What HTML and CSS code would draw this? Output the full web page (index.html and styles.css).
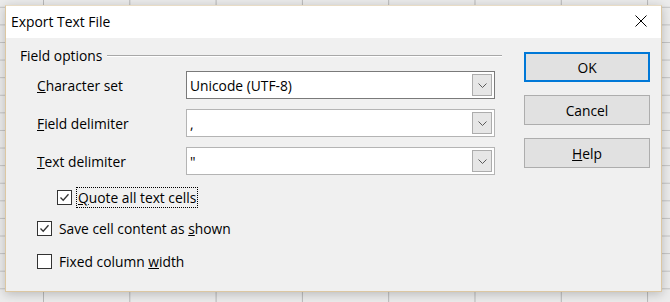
FILE: index.html
```html
<!DOCTYPE html>
<html lang="en">
<head>
    <meta charset="UTF-8">
    <title>Export Text File</title>
    <link rel="stylesheet" href="styles.css">
</head>
<body>
    <div class="dialog">
        <div class="titlebar">
            <span class="title">Export Text File</span>
            <svg class="close" viewBox="0 0 12 12" width="12" height="12">
                <path d="M0.5 0.5L11.5 11.5M11.5 0.5L0.5 11.5" stroke="#000" stroke-width="1" fill="none"/>
            </svg>
        </div>
        <div class="dialog-body">
            <div class="options">
                <div class="group-head">
                    <span>Field options</span>
                    <span class="rule"></span>
                </div>

                <div class="field">
                    <label><u>C</u>haracter set</label>
                    <div class="combo active">
                        <span class="value">Unicode (UTF-8)</span>
                        <span class="drop"><svg viewBox="0 0 9 5" width="9" height="5"><path d="M0.5 0.5L4.5 4.5L8.5 0.5" stroke="#5a5a5a" fill="none"/></svg></span>
                    </div>
                </div>
                <div class="field">
                    <label><u>F</u>ield delimiter</label>
                    <div class="combo">
                        <span class="value">,</span>
                        <span class="drop"><svg viewBox="0 0 9 5" width="9" height="5"><path d="M0.5 0.5L4.5 4.5L8.5 0.5" stroke="#5a5a5a" fill="none"/></svg></span>
                    </div>
                </div>
                <div class="field">
                    <label><u>T</u>ext delimiter</label>
                    <div class="combo">
                        <span class="value">"</span>
                        <span class="drop"><svg viewBox="0 0 9 5" width="9" height="5"><path d="M0.5 0.5L4.5 4.5L8.5 0.5" stroke="#5a5a5a" fill="none"/></svg></span>
                    </div>
                </div>

                <div class="checks">
                    <div class="check indent">
                        <span class="box on"><svg viewBox="0 0 13 13" width="13" height="13"><path d="M2.5 6.5L5.2 9.3L10.5 3.2" stroke="#333" stroke-width="1.3" fill="none"/></svg></span>
                        <span class="focus"><u>Q</u>uote all text cells</span>
                    </div>
                    <div class="check">
                        <span class="box on"><svg viewBox="0 0 13 13" width="13" height="13"><path d="M2.5 6.5L5.2 9.3L10.5 3.2" stroke="#333" stroke-width="1.3" fill="none"/></svg></span>
                        <span>Save cell content as <u>s</u>hown</span>
                    </div>
                    <div class="check">
                        <span class="box"></span>
                        <span>Fixed column <u>w</u>idth</span>
                    </div>
                </div>
            </div>

            <div class="actions">
                <button class="default">OK</button>
                <button>Cancel</button>
                <button class="help"><u>H</u>elp</button>
            </div>
        </div>
    </div>
</body>
</html>
```

FILE: styles.css
```css
body {
    margin: 0;
    padding: 5px;
    width: 670px;
    height: 302px;
    box-sizing: border-box;
    overflow: hidden;
    font-family: "Open Sans", "Noto Sans", sans-serif;
    font-size: 13.8px;
    color: #000;
    background-color: #ececec;
    background-image:
        linear-gradient(to right, #b9b9b9 1px, transparent 1px),
        linear-gradient(to bottom, #c4c4c4 1px, transparent 1px);
    background-size: 86.3px 100%, 100% 17.6px;
    background-position: 43px 0, 0 6.8px;
}
.dialog {
    width: 657px;
    height: 287px;
    box-sizing: border-box;
    background: #f0f0f0;
    border: 1px solid #dcc7a2;
    border-top-color: #e8dcc6;
    box-shadow: 0 2px 10px rgba(0,0,0,0.22);
    display: flex;
    flex-direction: column;
}
.titlebar {
    height: 32px;
    background: #fff;
    display: flex;
    align-items: center;
    justify-content: space-between;
    padding: 0 14px 0 5px;
    flex-shrink: 0;
}
.title {
    font-size: 13.9px;
    margin-top: -1px;
}
.close {
    display: block;
    margin-top: -3px;
}
.dialog-body {
    flex: 1;
    display: flex;
    padding: 8px 11px 0 14px;
}
.options {
    width: 482px;
}
.group-head {
    display: flex;
    align-items: center;
    height: 18px;
    margin-bottom: 7px;
}
.group-head .rule {
    flex: 1;
    height: 0;
    border-top: 1px solid #a8a8a8;
    border-bottom: 1px solid #fff;
    margin-left: 5px;
    margin-top: 2px;
}
.field {
    display: flex;
    align-items: center;
    height: 28px;
    margin-bottom: 10px;
}
.field label {
    width: 166px;
    padding-left: 17px;
    box-sizing: border-box;
    flex-shrink: 0;
}
.combo {
    width: 309px;
    height: 28px;
    box-sizing: border-box;
    background: #fff;
    border: 1px solid #b4b4b4;
    display: flex;
    align-items: center;
    padding: 2px 2px 2px 3px;
}
.combo.active {
    border-color: #7a7a7a;
}
.combo .value {
    flex: 1;
}
.combo .drop {
    width: 20px;
    height: 22px;
    box-sizing: border-box;
    background: #e6e6e6;
    border: 1px solid #acacac;
    display: flex;
    align-items: center;
    justify-content: center;
}
.combo .drop svg {
    display: block;
}
.checks {
    margin-top: -3px;
}
.check {
    display: flex;
    align-items: center;
    height: 33px;
    padding-left: 17px;
}
.check.indent {
    padding-left: 37px;
    height: 30px;
}
.box {
    width: 15px;
    height: 15px;
    box-sizing: border-box;
    border: 1px solid #333;
    background: #fff;
    margin-right: 7px;
    display: flex;
    align-items: center;
    justify-content: center;
    flex-shrink: 0;
}
.box svg {
    display: block;
}
.focus {
    outline: 1px dotted #000;
    outline-offset: 0;
    padding: 0 1px;
    margin-left: -2px;
}
.actions {
    margin-left: auto;
    width: 126px;
    display: flex;
    flex-direction: column;
    gap: 13px;
    padding-top: 6px;
}
button {
    font-family: inherit;
    font-size: 13.8px;
    color: #000;
    height: 30px;
    background: #e1e1e1;
    border: 1px solid #adadad;
    margin: 0;
    padding: 0;
}
button.default {
    border: 2px solid #0078d7;
}
```
